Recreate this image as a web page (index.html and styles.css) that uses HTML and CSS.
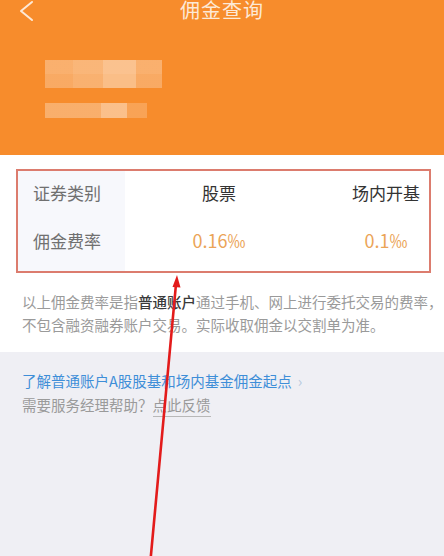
FILE: index.html
```html
<!DOCTYPE html>
<html lang="zh-CN">
<head>
<meta charset="utf-8">
<title>佣金查询</title>
<link rel="stylesheet" href="styles.css">
</head>
<body>
<div class="page">
  <header class="header">
    <div class="topbar">
      <svg class="back" width="16" height="22" viewBox="0 0 16 22"><polyline points="13,2 2,11 13,20" fill="none" stroke="#fde9d6" stroke-width="2" stroke-linecap="round" stroke-linejoin="round"/></svg>
      <h1 class="title">佣金查询</h1>
    </div>
    <div class="mask">
      <div class="mask-bar mask-a"></div>
      <div class="mask-bar mask-b"></div>
    </div>
  </header>

  <section class="card">
    <div class="table">
      <div class="cell head">证券类别</div>
      <div class="cell col2 dark">股票</div>
      <div class="cell col3 dark">场内开基</div>
      <div class="cell head">佣金费率</div>
      <div class="cell col2 rate">0.16‰</div>
      <div class="cell col3 rate">0.1‰</div>
    </div>
    <p class="note">以上佣金费率是指<b>普通账户</b>通过手机、网上进行委托交易的费率，不包含融资融券账户交易。实际收取佣金以交割单为准。</p>
  </section>

  <section class="more">
    <p class="link">了解普通账户A股股基和场内基金佣金起点<span class="chev">›</span></p>
    <p class="help">需要服务经理帮助？<span class="fb">点此反馈</span></p>
  </section>

  <svg class="arrow" width="444" height="556" viewBox="0 0 444 556">
    <line x1="150.5" y1="560" x2="176" y2="284" stroke="#e31b1b" stroke-width="2.6" stroke-linecap="round"/>
    <polygon points="177,275 172.5,287 180.5,287.5" fill="#e31b1b"/>
  </svg>
</div>
</body>
</html>
```

FILE: styles.css
```css
* { box-sizing: border-box; }
html, body { margin: 0; padding: 0; }
body {
  width: 444px;
  height: 556px;
  overflow: hidden;
  background: #efeff4;
  font-family: "Noto Sans CJK SC", "Noto Sans", sans-serif;
}
.page { position: relative; width: 444px; height: 556px; overflow: hidden; }

.header {
  height: 155px;
  background: #f78c2c;
}
.topbar {
  position: relative;
  height: 20px;
  display: flex;
  align-items: center;
  justify-content: center;
}
.back { position: absolute; left: 19px; top: 0; }
.title {
  margin: 0;
  font-size: 20px;
  line-height: 22px;
  font-weight: 400;
  color: #fde9d6;
  letter-spacing: 1px;
}
.mask {
  margin: 40px 0 0 45px;
  display: flex;
  flex-direction: column;
  gap: 15px;
}
.mask-bar { height: 28px; }
.mask-a {
  width: 117px;
  background:
    linear-gradient(180deg, rgba(255,255,255,0.12) 0 50%, rgba(255,255,255,0.06) 50% 100%),
    linear-gradient(90deg, rgba(255,255,255,0.22) 0 24%, rgba(255,255,255,0.28) 24% 50%, rgba(255,255,255,0.4) 50% 78%, rgba(255,255,255,0.22) 78% 100%);
}
.mask-b {
  width: 102px;
  height: 15px;
  background: linear-gradient(90deg, rgba(255,255,255,0.3) 0 55%, rgba(255,255,255,0.45) 55% 80%, rgba(255,255,255,0.2) 80% 100%);
}

.card {
  background: #fff;
  padding: 14px 0 16px 16px;
}
.table {
  width: 415px;
  border: 2px solid #dc7c6e;
  display: grid;
  grid-template-columns: 107px 188px 1fr;
  grid-template-rows: 42px 54px;
  padding-bottom: 4px;
  background: linear-gradient(90deg, #f7f8fc 0 107px, #fff 107px);
}
.cell {
  display: flex;
  align-items: center;
  font-size: 17px;
}
.head { padding-left: 15px; color: #707070; }
.col2 { justify-content: center; }
.col3 { justify-content: center; padding-left: 30px; }
.dark { color: #333; }
.rate { color: #eba457; font-size: 18px; }

.note {
  margin: 17px 0 0 6px;
  font-size: 14.5px;
  line-height: 23px;
  color: #9a9a9a;
  width: 422px;
}
.note b { color: #3a3a3a; font-weight: 500; }

.more {
  padding: 17px 0 0 22px;
}
.more p { margin: 0; font-size: 14.5px; line-height: 24px; }
.link { color: #3e8ed8; }
.chev { color: #b7c9dd; margin-left: 6px; font-size: 15px; }
.help { color: #9a9a9a; }
.fb {
  color: #9a9a9a;
  border-bottom: 1.5px solid #b8b8b8;
  padding-bottom: 1px;
}

.arrow { position: absolute; left: 0; top: 0; pointer-events: none; }
```
